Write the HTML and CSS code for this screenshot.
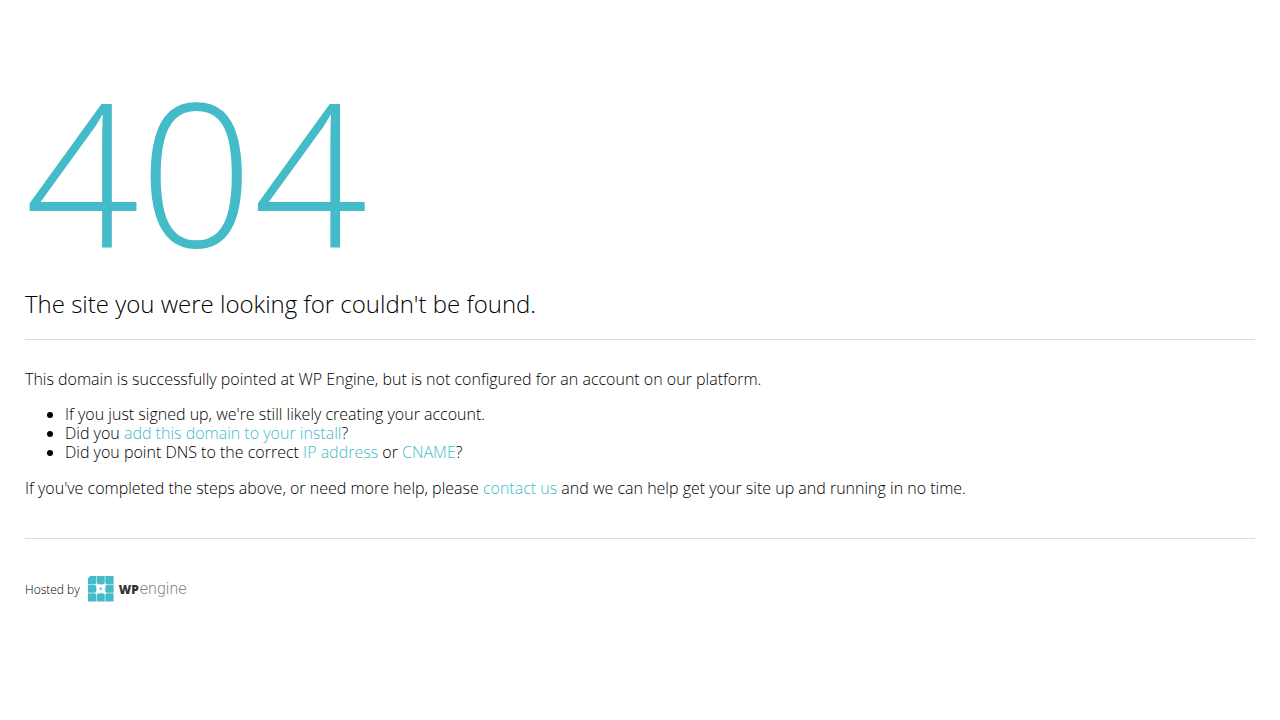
FILE: index.html
```html
<!DOCTYPE html>
<html lang="en">
<head>
<meta charset="utf-8">
<title>Site Not Found</title>
<link rel="stylesheet" href="styles.css">
</head>
<body>
<main class="page">
  <h1 class="code">404</h1>
  <h2 class="headline">The site you were looking for couldn't be found.</h2>
  <section class="details">
    <p>This domain is successfully pointed at WP Engine, but is not configured for an account on our platform.</p>
    <ul class="steps">
      <li>If you just signed up, we're still likely creating your account.</li>
      <li>Did you <a href="#">add this domain to your install</a>?</li>
      <li>Did you point DNS to the correct <a href="#">IP address</a> or <a href="#">CNAME</a>?</li>
    </ul>
    <p>If you've completed the steps above, or need more help, please <a href="#">contact us</a> and we can help get your site up and running in no time.</p>
  </section>
  <footer class="hosted">
    <span>Hosted by</span>
    <a class="brand" href="#" aria-label="WP Engine">
      <svg class="mark" viewBox="0 0 26 26" aria-hidden="true">
        <path fill="#44bbc8" d="M2.2 0H25.6V25.4H0V2.2Z"/>
        <path stroke="#fff" stroke-opacity=".75" stroke-width=".8" d="M8.6 0V26M17 0V26M0 8.6H26M0 17H26"/>
        <path fill="#fff" d="M7.2 8.2L8.2 7.2Q9 6.9 9.7 8.2Q12.8 9.6 15.9 8.2Q16.6 6.9 17.4 7.2L18.4 8.2Q18.7 9 17.4 9.7Q16 12.8 17.4 15.9Q18.7 16.6 18.4 17.4L17.4 18.4Q16.6 18.7 15.9 17.4Q12.8 16 9.7 17.4Q9 18.7 8.2 18.4L7.2 17.4Q6.9 16.6 8.2 15.9Q9.6 12.8 8.2 9.7Q6.9 9 7.2 8.2Z"/>
        <circle fill="#44bbc8" cx="12.8" cy="12.8" r="1.2"/>
      </svg>
      <span class="word"><b>WP</b><span>engine</span></span>
    </a>
  </footer>
</main>
</body>
</html>
```
FILE: styles.css
```css
body {
  margin: 0;
  background: #fff;
  color: #000;
  font-family: "Open Sans", "Noto Sans", sans-serif;
  font-size: 16px;
  font-weight: 300;
  line-height: 19px;
}
.page { padding: 70px 25px 0; }
.code {
  margin: 0;
  color: #44bbc8;
  font-size: 200px;
  font-weight: 300;
  line-height: 200px;
}
.headline {
  margin: 19px 0 0;
  font-size: 24px;
  font-weight: 300;
  line-height: 29px;
}
.details {
  margin-top: 21px;
  padding: 30px 0 40px;
  border: solid #ddd;
  border-width: 1px 0;
}
.details p { margin: 0; }
.steps {
  margin: 16px 0 17px;
  padding-left: 40px;
}
a { color: #44bbc8; text-decoration: none; }
.hosted {
  display: flex;
  align-items: center;
  gap: 8px;
  padding-top: 37px;
  font-size: 12px;
}
.brand { display: flex; align-items: center; gap: 5px; }
.mark { width: 26px; height: 26px; }
.word {
  display: flex;
  align-items: baseline;
  gap: 1px;
  color: #888;
  font-family: Roboto, sans-serif;
  font-size: 16px;
}
.word b {
  color: #333;
  font-family: "Open Sans", sans-serif;
  font-size: 12px;
  font-weight: 800;
}
```
